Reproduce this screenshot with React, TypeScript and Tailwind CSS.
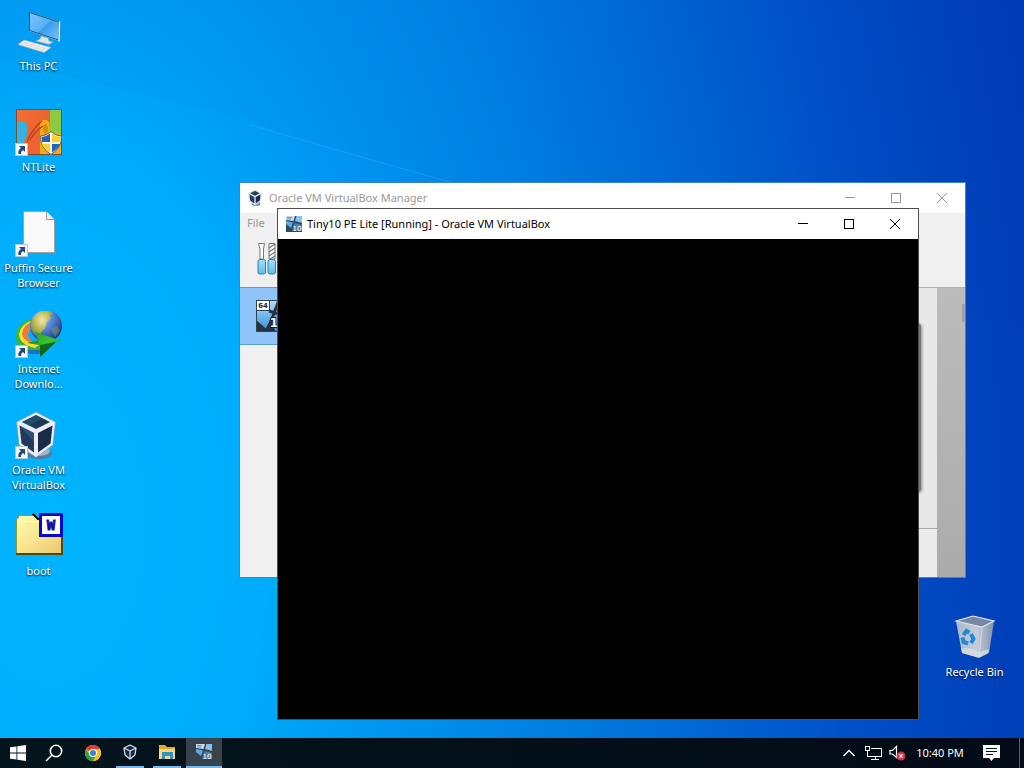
import React from 'react';

interface DesktopItem {
  label: string;
  icon: React.ReactNode;
  shortcut?: boolean;
}

const ThisPcIcon = () => (
  <svg viewBox="0 0 48 48" className="w-12 h-12">
    <defs>
      <linearGradient id="pcScreen" x1="0" y1="0" x2="1" y2="1">
        <stop offset="0" stopColor="#7cc8fa" />
        <stop offset="0.5" stopColor="#55b0f5" />
        <stop offset="0.52" stopColor="#3a9cf0" />
        <stop offset="1" stopColor="#6cc6fc" />
      </linearGradient>
    </defs>
    <path d="M14 4 L44.500 13.500 L44 33 L14 23 Z" fill="#d9e3ea" />
    <path d="M14.500 4.500 L44 14 L43.500 32 L14.500 22.500 Z" fill="url(#pcScreen)" stroke="#2c4b66" strokeWidth="1" />
    <path d="M44.500 13.500 L44 33.500" stroke="#e8eef2" strokeWidth="1.500" />
    <path d="M26 28 L33 30 L34 33 L38 34 L34 36.500 L21 33 L25 31 Z" fill="#dfe6ea" stroke="#90a4b0" strokeWidth=".6" />
    <path d="M9 32 L36 39.500 L29 44.500 L3 36.500 Z" fill="#f1f3f4" stroke="#a6b7c2" strokeWidth=".7" />
    <path d="M8 34 L32 41 M6 35.500 L30 42.500 M13 33.500 L8 37.500 M19 35.500 L14 39.500 M25 37 L20 41.500 M31 38.500 L26 43" stroke="#d3d0cf" strokeWidth=".7" />
  </svg>
);

const NtLiteIcon = () => (
  <svg viewBox="0 0 48 48" className="w-12 h-12">
    <defs>
      <linearGradient id="ntT" x1="0" y1="0" x2="1" y2="1">
        <stop offset="0" stopColor="#f4713a" />
        <stop offset="1" stopColor="#e2511d" />
      </linearGradient>
    </defs>
    <rect x="1" y="0" width="46" height="46" fill="url(#ntT)" />
    <path d="M2 12 H10 Q14 18 12 26 L9 34 L14 45 H2 Z" fill="#35b2e0" />
    <path d="M12 30 Q17 20 25 17 V45 H12 Z" fill="#ee6330" />
    <path d="M35 1 H46 V26 H35 Z" fill="#8fc841" />
    <path d="M25 14 Q27 10 31 11 Q35 12 35 18 V24 H46 V45 H25 Z" fill="#f6ab1a" />
    <path d="M28 20 Q28 15 31 15 Q33 15 33 22 L30 27 Z" fill="#d98a12" />
    <path d="M12 33 Q17 20 27 12 M15 31 Q20 22 28 17" stroke="#bd431a" strokeWidth="1.400" fill="none" />
    <rect x="1.500" y=".5" width="45" height="45" fill="none" stroke="#7c4d35" />
    <path d="M36 22.500 Q41 27 46.500 27 Q47 39 36 45.500 Q25 39 25.500 27 Q31 27 36 22.500 Z" fill="#f7f4df" stroke="#6d6549" strokeWidth="1" />
    <path d="M35 24.500 V33 H26.800 V28 Q31 28 35 24.500 Z" fill="#2461b8" />
    <path d="M37 24.500 Q41 28 45.300 28 V33 H37 Z" fill="#fad02e" />
    <path d="M35 35 V43.500 Q28 39 27 35 Z" fill="#fad02e" />
    <path d="M37 35 V43.500 Q44 39 45 35 Z" fill="#2461b8" />
  </svg>
);

const FileIcon = () => (
  <svg viewBox="0 0 48 48" className="w-12 h-12">
    <path d="M8.500 1.500 H31.500 L39.500 9.500 V42.500 H8.500 Z" fill="#fafafa" stroke="#a5a19a" />
    <path d="M31.500 1.500 V9.500 H39.500" fill="#e9eef1" stroke="#a5958c" />
  </svg>
);

const DownloadManagerIcon = () => (
  <svg viewBox="0 0 48 48" className="w-12 h-12">
    <defs>
      <radialGradient id="globe" cx=".35" cy=".25" r=".8">
        <stop offset="0" stopColor="#dcecff" />
        <stop offset="0.4" stopColor="#5c8fe0" />
        <stop offset="1" stopColor="#18327a" />
      </radialGradient>
      <radialGradient id="land" cx=".5" cy=".35" r=".7">
        <stop offset="0" stopColor="#f1e9a4" />
        <stop offset="0.6" stopColor="#b4b04c" />
        <stop offset="1" stopColor="#5f8a45" />
      </radialGradient>
      <linearGradient id="idmArrow" x1="0" y1="0" x2="1" y2="1">
        <stop offset="0" stopColor="#0d5f12" />
        <stop offset=".5" stopColor="#2fb532" />
        <stop offset="1" stopColor="#0b5b17" />
      </linearGradient>
    </defs>
    <path d="M19 7 Q4 10 1 23 Q0 36 14 43 L26 41 L25 33 Q12 31 13 23 Q14 17 20 14 Z" fill="#3cb53a" />
    <path d="M19 9 Q6 12 4 23 Q4 33 20 37 L25 33 Q12 31 13 23 Q14 17 20 14 Z" fill="#f4e034" />
    <path d="M19 10 Q8 13 7 23 Q8 31 23 34 Q12 30 13 23 Q14 17 20 14 Z" fill="#ee7a3f" />
    <path d="M10 38 Q18 40 27 38 L24 43 H14 Z" fill="#1d70c9" />
    <circle cx="31" cy="15" r="16" fill="url(#globe)" />
    <path d="M16 14 Q17 4 27 0 Q37 -1 38 3 Q33 4 36 7 Q33 10 31 12 Q32 17 27 20 L24 26 Q16 22 16 14 Z" fill="url(#land)" />
    <path d="M36 18 L42 15 L45 20 L40 26 Z" fill="#7f9a62" opacity=".5" />
    <path d="M20 21 L47 30 L41 31 L25 46 L25 34 L12 32 L24 29 Z" fill="url(#idmArrow)" />
    <path d="M20 21 L47 30 L25 34 Z" fill="#3fd035" opacity=".5" />
    <path d="M25 34 L41 31 L25 46 Z" fill="#0a4f13" opacity=".7" />
  </svg>
);

const VirtualBoxIcon = ({ className }: { className: string }) => (
  <svg viewBox="0 0 48 48" className={className}>
    <ellipse cx="24" cy="41" rx="13" ry="6" fill="#56789d" />
    <ellipse cx="24" cy="39" rx="11" ry="5" fill="#9fb6cf" />
    <path d="M21 0 L40.500 10 L38 33 L21 45.500 L4 33 L1.500 10 Z" fill="#e9edf5" stroke="#7890ab" strokeWidth=".6" />
    <path d="M21 3 L35 10 L21 17 L7 10 Z" fill="#1b3a52" />
    <path d="M4.500 13.500 L19 21 V40.500 L6.500 31.500 Z" fill="#22395e" />
    <path d="M37.500 13.500 L23 21 V40.500 L35.500 31.500 Z" fill="#1a2a49" />
    <path d="M4.500 13.500 L19 21 V30 Z" fill="#3c5d83" opacity=".6" />
    <path d="M21 3 L28 6.500 L14 13.500 L7 10 Z" fill="#28607d" opacity=".5" />
  </svg>
);

const BootFolderIcon = () => (
  <svg viewBox="0 0 48 48" className="w-12 h-12" shapeRendering="crispEdges">
    <defs>
      <linearGradient id="folder" x1="0" y1="0" x2="1" y2="1">
        <stop offset="0" stopColor="#fffcae" />
        <stop offset=".6" stopColor="#f6e08a" />
        <stop offset="1" stopColor="#e9c46e" />
      </linearGradient>
    </defs>
    <path d="M1 7 L5 2 H19 L23 6 H46 V41 H1 Z" fill="url(#folder)" stroke="#8d9a32" />
    <path d="M2 8 H24" stroke="#fffde0" strokeWidth="1" />
    <path d="M18 1 L24 7" stroke="#1c1c1c" strokeWidth="2" />
    <path d="M1 41 H47 V8" fill="none" stroke="#4f4a10" strokeWidth="2" />
    <rect x="25.500" y="1.500" width="21" height="21" fill="#fff" stroke="#0808c8" strokeWidth="3" />
    <text x="36" y="17" textAnchor="middle" fontSize="14" fontWeight="bold" fontFamily="DejaVu Sans Mono, monospace" fill="#0b0b9c" stroke="#0b0b9c" strokeWidth=".8">
      W
    </text>
  </svg>
);

const RecycleBinIcon = () => (
  <svg viewBox="0 0 48 48" className="w-12 h-12">
    <defs>
      <linearGradient id="bin" x1="0" y1="0" x2="1" y2="0">
        <stop offset="0" stopColor="#a9b7cc" />
        <stop offset=".55" stopColor="#c5ccd9" />
        <stop offset="1" stopColor="#8290ab" />
      </linearGradient>
    </defs>
    <path d="M5 7 L22 2 L43 7 L38 39 L28 44 L11 39 Z" fill="url(#bin)" />
    <path d="M5 7 L22 2 L43 7 L31 13 Z" fill="#7688a3" stroke="#dfe5ec" strokeWidth="1.200" />
    <path d="M31 13 L28 43" stroke="#eef2f6" strokeWidth=".8" opacity=".6" />
    <path d="M10 34 L22 35 L28 38 L38 35 L37 39 L28 43.500 L11 39 Z" fill="#dfe1e2" opacity=".7" />
    <g fill="none" stroke="#1e8ad6" strokeWidth="4">
      <path d="M12.500 21 L15.500 17 L18.500 18.500" />
      <path d="M20 20 L22.500 25 L20 29" />
      <path d="M17 29.500 L12.500 28 L11.500 23.500" />
    </g>
  </svg>
);

const ShortcutArrow = () => (
  <svg viewBox="0 0 13 13" className="absolute left-0 bottom-px w-[13px] h-[13px]">
    <rect x=".5" y=".5" width="12" height="12" fill="#f7f9fb" stroke="#b9c4cc" />
    <path d="M4 3 H10 V9 L8 7 Q5.500 8.500 6 11 H3.500 Q2.500 7.500 6 5 Z" fill="#1f4a86" />
  </svg>
);

/* Guest thumbnail with the "64" tag and the Windows 10 mark */
const GuestIcon = () => (
  <svg viewBox="0 0 32 32" className="w-8 h-8 shrink-0">
    <defs>
      <linearGradient id="guest" x1="0" y1="0" x2="0" y2="1">
        <stop offset="0" stopColor="#b5e0fa" />
        <stop offset="1" stopColor="#2f8ee0" />
      </linearGradient>
    </defs>
    <rect width="32" height="32" fill="url(#guest)" />
    <path d="M0 20 L14 32 H0 Z M14 20 L20 32 H8 Z" fill="#26323f" />
    <path d="M23 0 L11 32 M13 11 L32 17" stroke="#26323f" strokeWidth="3" />
    <rect x=".5" y=".5" width="31" height="31" fill="none" stroke="#33424f" />
    <rect x=".5" y=".5" width="13" height="10" fill="#fff" stroke="#33424f" />
    <text x="7" y="8" textAnchor="middle" fontSize="7" fontWeight="bold" fontFamily="DejaVu Sans, sans-serif" fill="#222">
      64
    </text>
    <text x="22" y="27" textAnchor="middle" fontSize="12" fontWeight="bold" fontFamily="DejaVu Sans, sans-serif" fill="#fff" stroke="#16202b" strokeWidth="2" paintOrder="stroke">
      10
    </text>
  </svg>
);

const SmallGuestIcon = ({ framed }: { framed?: boolean }) => (
  <svg viewBox="0 0 16 16" className="w-4 h-4">
    {framed && <rect width="16" height="16" fill="#294b66" />}
    <path d="M0 0 H9 L7.500 5 L0 4 Z" fill="#c9dde9" />
    <path d="M10.500 0 H16 V7 L9 5 Z" fill="#83c3ee" />
    <path d="M0 5 L7 6.500 L5 12 L0 8 Z" fill="#5eade8" />
    <path d="M8.500 7 L16 9 V15 H6 Z" fill="#557fa6" />
    <path d="M1 1.500 H6 M1 3 H5" stroke="#6d7f8c" strokeWidth=".8" />
    <text x="11" y="14.500" textAnchor="middle" fontSize="7" fontFamily="DejaVu Sans, sans-serif" fill="#fff">
      10
    </text>
  </svg>
);

const ToolsIcon = () => (
  <svg viewBox="0 0 20 32" className="w-5 h-8 shrink-0">
    <defs>
      <linearGradient id="handle" x1="0" y1="0" x2="0" y2="1">
        <stop offset="0" stopColor="#a4def8" />
        <stop offset="1" stopColor="#60bdec" />
      </linearGradient>
    </defs>
    <path d="M1.500 .5 H7.500 L6.500 6 V16 H3 V6 Z" fill="#fff" stroke="#777" />
    <path d="M12 .5 H18 V16 H12 Z" fill="#fff" stroke="#777" />
    <path d="M12 5 L18 1 M12 9 L18 5 M12 13 L18 9 M13 16 L18 13" stroke="#777" strokeWidth="1.200" />
    <rect x="1" y="16.500" width="7.500" height="14.500" rx="2" fill="url(#handle)" stroke="#2683b8" />
    <rect x="11" y="16.500" width="7.500" height="14.500" rx="2" fill="url(#handle)" stroke="#2683b8" />
  </svg>
);

const ChromeIcon = () => (
  <svg viewBox="0 0 32 32" className="w-4 h-4">
    <circle cx="16" cy="16" r="16" fill="#fbc116" />
    <path d="M16 16 L2.140 8 A16 16 0 0 1 29.860 8 Z" fill="#e33b2e" />
    <path d="M2.140 8 A16 16 0 0 0 16 32 L23 20 L9 20 Z" fill="#2ba24c" />
    <path d="M16 8 H29.860 A16 16 0 0 1 16 32 L23 20 Z" fill="#fbc116" />
    <circle cx="16" cy="16" r="8" fill="#fff" />
    <circle cx="16" cy="16" r="6" fill="#3f7de0" />
  </svg>
);

const BoxOutlineIcon = () => (
  <svg viewBox="0 0 16 16" className="w-4 h-4" fill="none" stroke="#d3dceb" strokeWidth="1.300" strokeLinejoin="round">
    <path d="M8 1 L14 4 L13 11 L8 15 L3 11 L2 4 Z" fill="#17263f" />
    <path d="M2 4 L8 7 L14 4 M8 7 V15" />
  </svg>
);

const ExplorerIcon = () => (
  <svg viewBox="0 0 18 16" className="w-[18px] h-4">
    <path d="M1 1 H7 L9 3 H17 V15 H1 Z" fill="#e5a92e" />
    <path d="M1 5 H17 V15 H1 Z" fill="#fbd874" />
    <path d="M4 8 H15 V15 H12 V12 H7 V15 H4 Z" fill="#3293c9" />
  </svg>
);

const StartIcon = () => (
  <svg viewBox="0 0 16 16" className="w-4 h-4" fill="#fff">
    <path d="M0 2.300 L6.500 1.400 V7.600 H0 Z M7.300 1.300 L16 0 V7.600 H7.300 Z M0 8.400 H6.500 V14.600 L0 13.700 Z M7.300 8.400 H16 V16 L7.300 14.700 Z" />
  </svg>
);

const SearchIcon = () => (
  <svg viewBox="0 0 18 18" className="w-[18px] h-[18px]" fill="none" stroke="#fff" strokeWidth="1.600">
    <circle cx="11" cy="7" r="5.700" />
    <path d="M7 11 L1 17" />
  </svg>
);

const ChevronIcon = () => (
  <svg viewBox="0 0 12 8" className="w-3 h-2" fill="none" stroke="#fff" strokeWidth="1.400">
    <path d="M.5 7 L6 1.500 L11.500 7" />
  </svg>
);

const NetworkIcon = () => (
  <svg viewBox="0 0 17 14" className="w-[17px] h-[14px]" fill="none" stroke="#fff" shapeRendering="crispEdges">
    <path d="M5.500 2.500 H16.500 V10.500 H2.500 V5" />
    <rect x=".5" y=".5" width="4" height="4" />
    <path d="M10.500 11 V13.500 M6 13.500 H14" />
  </svg>
);

const MutedIcon = () => (
  <svg viewBox="0 0 17 16" className="w-[17px] h-4">
    <path d="M1 5.500 H3.500 L7.500 1.500 V12.500 L3.500 9 H1 Z" fill="none" stroke="#fff" strokeWidth="1.200" />
    <circle cx="12" cy="11" r="4.500" fill="#d32f45" />
    <path d="M10.200 9.200 L13.800 12.800 M13.800 9.200 L10.200 12.800" stroke="#fff" strokeWidth="1.200" />
  </svg>
);

const ActionCenterIcon = () => (
  <svg viewBox="0 0 17 16" className="w-[17px] h-4">
    <path d="M0 0 H17 V13 H11 L8.500 16 L6 13 H0 Z" fill="#fff" />
    <path d="M3 3.500 H14 M3 6.500 H14 M3 9.500 H10" stroke="#04101c" shapeRendering="crispEdges" />
  </svg>
);

const DesktopIcon: React.FC<DesktopItem> = ({ label, icon, shortcut }) => (
  <button className="w-[77px] h-[101px] pt-2 flex flex-col items-center gap-0.5">
    <span className="relative block w-12 h-12 shrink-0">
      {icon}
      {shortcut && <ShortcutArrow />}
    </span>
    <span className="w-[77px] text-center leading-[15px] text-white whitespace-pre-line [text-shadow:0_1px_2px_rgba(0,0,0,0.9)]">
      {label}
    </span>
  </button>
);

const WindowControls = ({ active }: { active?: boolean }) => (
  <div className={active ? 'flex text-black' : 'flex text-[#999]'}>
    <button aria-label="Minimize" className="w-[46px] h-[30px] flex items-center justify-center">
      <svg viewBox="0 0 10 10" className="w-[10px] h-[10px]" stroke="currentColor" shapeRendering="crispEdges">
        <path d="M0 4.500 H10" />
      </svg>
    </button>
    <button aria-label="Maximize" className="w-[46px] h-[30px] flex items-center justify-center">
      <svg viewBox="0 0 10 10" className="w-[10px] h-[10px]" fill="none" stroke="currentColor" shapeRendering="crispEdges">
        <rect x=".5" y=".5" width="9" height="9" />
      </svg>
    </button>
    <button aria-label="Close" className="w-[46px] h-[30px] flex items-center justify-center">
      <svg viewBox="0 0 10 10" className="w-[10px] h-[10px]" stroke="currentColor">
        <path d="M0 0 L10 10 M10 0 L0 10" />
      </svg>
    </button>
  </div>
);

const ManagerWindow = () => (
  <section className="absolute left-[239px] top-[182px] w-[727px] h-[396px] flex flex-col border border-[#3a86c4] bg-[#f0f0f0]">
    <header className="flex items-center h-[30px] shrink-0 bg-white pl-2">
      <VirtualBoxIcon className="w-4 h-4 mr-[5px]" />
      <h2 className="flex-1 text-[#999]">Oracle VM VirtualBox Manager</h2>
      <WindowControls />
    </header>
    <nav className="flex items-center h-5 shrink-0 px-[7px]">
      <button className="text-[#999]">File</button>
    </nav>
    <div className="flex items-start flex-1 max-h-[54px] shrink-0 pt-2.5 pl-[17px]">
      <ToolsIcon />
    </div>
    <div className="flex flex-1 min-h-0">
      <div className="flex-1">
        <div className="flex items-center h-[58px] border-y border-[#5b9bd0] bg-[#8fc5fa] pl-4">
          <GuestIcon />
        </div>
      </div>
      {/* Details pane */}
      <div className="w-[300px] flex flex-col border-t border-[#b0b0b0] bg-[#e8e8e8]">
        <div className="mt-[35px] mr-4 h-[169px] rounded-sm border-r-2 border-[#777] bg-[#e4e4e4] shadow-[1px_1px_3px_#888]" />
        <div className="mt-9 flex-1 border-t border-[#a8a8a8] bg-[#ebebeb]" />
      </div>
      <div className="w-7 flex justify-end border-t border-[#b0b0b0] bg-[linear-gradient(#bcbcbc,#ababab)]">
        <div className="mt-4 w-[3px] h-[18px] bg-[#a0a0a8]" />
      </div>
    </div>
  </section>
);

const MachineWindow = () => (
  <section className="absolute left-[277px] top-[208px] w-[642px] h-[512px] flex flex-col border border-[#4d4d4d] bg-black">
    <header className="flex items-center h-[30px] shrink-0 bg-white pl-2">
      <span className="mr-[5px]"><SmallGuestIcon framed /></span>
      <h1 className="flex-1 text-black">Tiny10 PE Lite [Running] - Oracle VM VirtualBox</h1>
      <WindowControls active />
    </header>
    <div className="flex-1 bg-black" />
  </section>
);

const Wallpaper = () => (
  <svg viewBox="0 0 1024 768" preserveAspectRatio="none" className="absolute inset-0 w-full h-full" aria-hidden="true">
    <path d="M0 60 L240 118 L450 182 L1024 330 L1024 0 L0 0 Z" fill="#003a9c" opacity=".02" />
    <path d="M250 125 L340 151 L450 182" fill="none" stroke="#5cc0ff" strokeWidth="1" opacity=".25" />
  </svg>
);

const Taskbar = () => (
  <footer className="relative flex h-[30px] shrink-0 bg-[linear-gradient(90deg,#03141c,#020b17)] text-white">
    <button aria-label="Start" className="w-9 flex items-center justify-center"><StartIcon /></button>
    <button aria-label="Search" className="w-9 flex items-center justify-center"><SearchIcon /></button>
    <div className="flex ml-[3px] gap-px">
      <button aria-label="Chrome" className="w-9 flex items-center justify-center"><ChromeIcon /></button>
      <button aria-label="VirtualBox Manager" className="w-9 flex flex-col items-center">
        <span className="flex-1 flex items-center"><BoxOutlineIcon /></span>
        <span className="w-7 h-0.5 bg-[#76b9ed]" />
      </button>
      <button aria-label="File Explorer" className="w-9 flex flex-col items-center">
        <span className="flex-1 flex items-center"><ExplorerIcon /></span>
        <span className="w-7 h-0.5 bg-[#76b9ed]" />
      </button>
      <button aria-label="Tiny10 PE Lite" className="w-9 flex flex-col items-center bg-[#37424a]">
        <span className="flex-1 flex items-center"><SmallGuestIcon /></span>
        <span className="w-9 h-0.5 bg-[#76b9ed]" />
      </button>
    </div>
    <div className="ml-auto flex items-center">
      <button aria-label="Show hidden icons" className="w-6 flex justify-center"><ChevronIcon /></button>
      <button aria-label="Network" className="w-6 flex justify-center"><NetworkIcon /></button>
      <button aria-label="Volume" className="w-6 flex justify-center"><MutedIcon /></button>
      <time className="w-[62px] text-center">10:40 PM</time>
      <button aria-label="Notifications" className="w-10 flex justify-center"><ActionCenterIcon /></button>
      <button aria-label="Show desktop" className="ml-2 w-[5px] h-[30px] border-l border-[#59626c]" />
    </div>
  </footer>
);

const desktopItems: DesktopItem[] = [
  { label: 'This PC', icon: <ThisPcIcon /> },
  { label: 'NTLite', icon: <NtLiteIcon />, shortcut: true },
  { label: 'Puffin Secure\nBrowser', icon: <FileIcon />, shortcut: true },
  { label: 'Internet\nDownlo...', icon: <DownloadManagerIcon />, shortcut: true },
  { label: 'Oracle VM\nVirtualBox', icon: <VirtualBoxIcon className="w-12 h-12" />, shortcut: true },
  { label: 'boot', icon: <BootFolderIcon /> },
];

const App: React.FC = () => {
  return (
    <div className="relative min-h-screen flex flex-col overflow-hidden font-['Noto_Sans','Open_Sans',sans-serif] text-[11px] bg-[radial-gradient(ellipse_95%_220%_at_5%_68%,#00b4ff_0%,#00acfb_22%,#0098f2_34%,#007ce0_55%,#0050c8_83%,#003cb6_103%)]">
      <Wallpaper />
      <main className="relative flex-1">
        <div className="flex flex-col items-start">
          {desktopItems.map((item) => (
            <DesktopIcon key={item.label} {...item} />
          ))}
        </div>
        <div className="absolute right-[11px] top-[606px]">
          <DesktopIcon label="Recycle Bin" icon={<RecycleBinIcon />} />
        </div>
        <ManagerWindow />
        <MachineWindow />
      </main>
      <Taskbar />
    </div>
  );
};

export default App;
